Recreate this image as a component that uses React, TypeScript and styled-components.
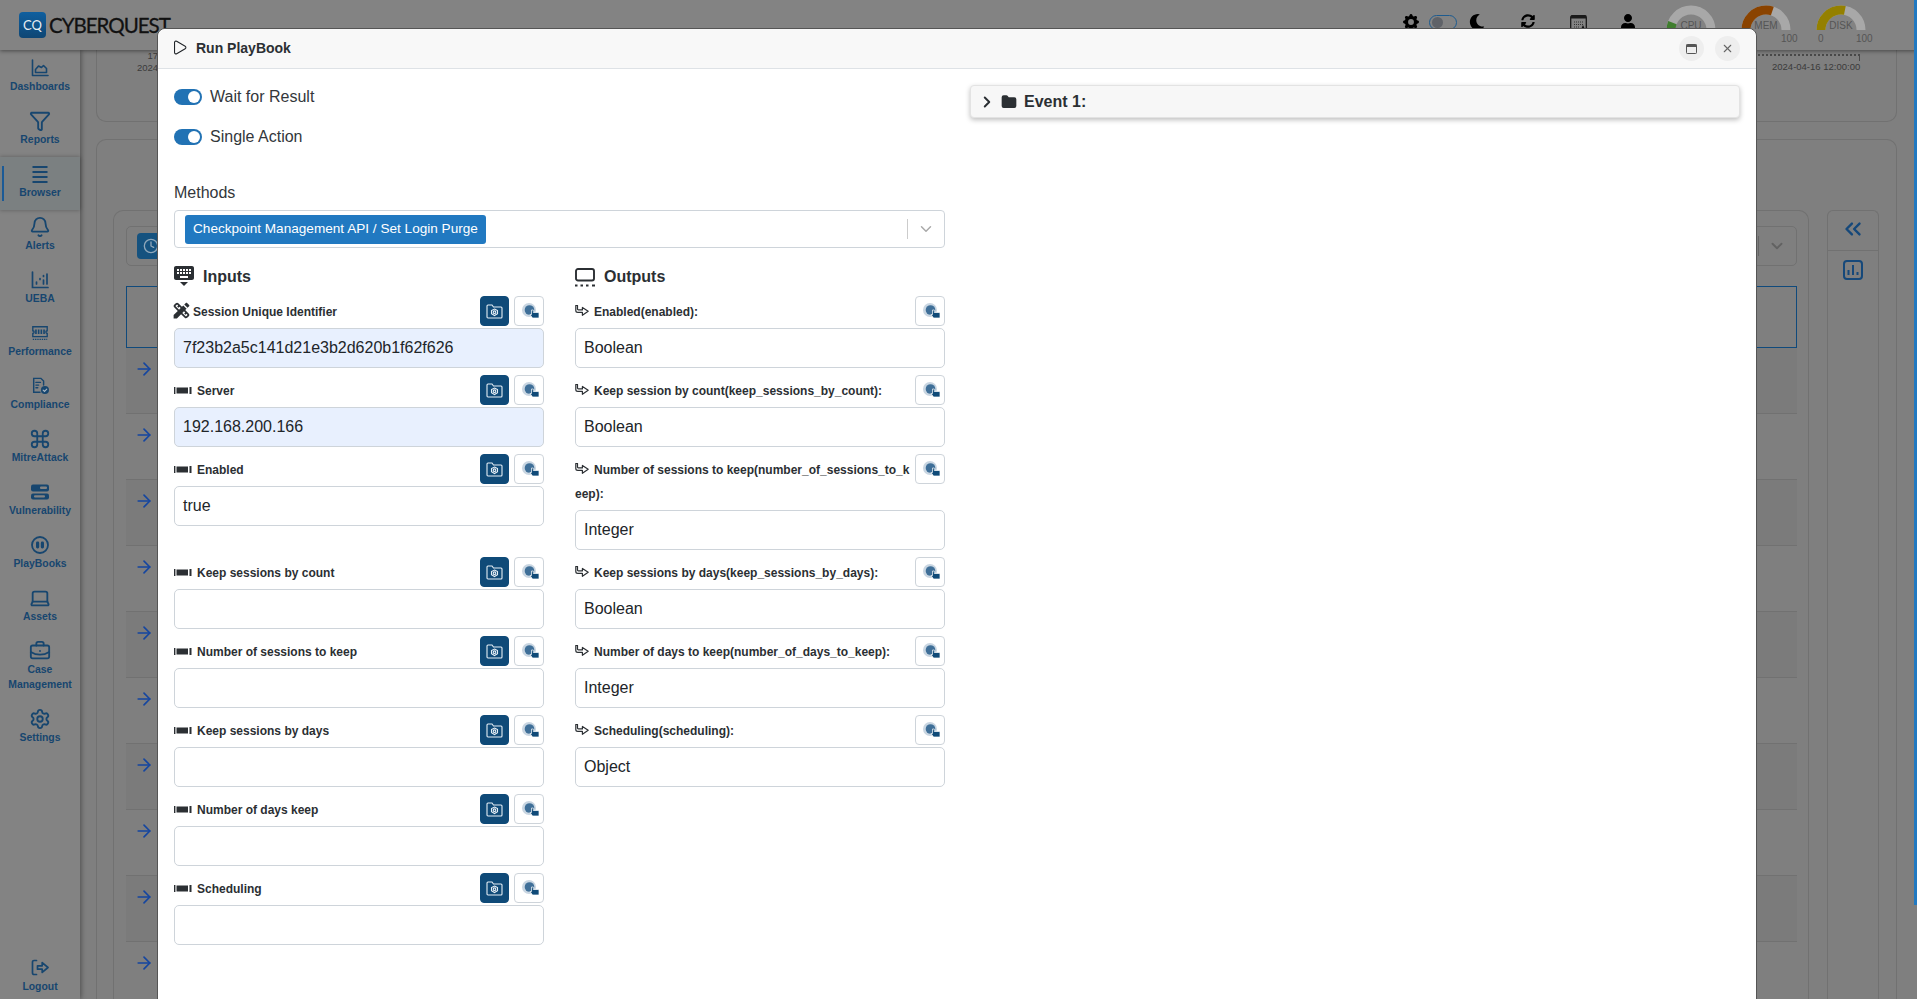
import React from 'react';
import styled, { createGlobalStyle } from 'styled-components';
import {
  ArrowRight,
  Bell,
  BriefcaseBusiness,
  ChevronDown,
  ChevronRight,
  ChevronsLeft,
  Clock,
  Command,
  Folder,
  Funnel,
  Laptop,
  Play,
  Settings,
  X,
} from 'lucide-react';
import { MdDesignServices, MdKeyboardHide } from 'react-icons/md';
import { FaMoon, FaSyncAlt, FaUser } from 'react-icons/fa';
import { BsGearFill } from 'react-icons/bs';

const GlobalStyle = createGlobalStyle`
  html, body {
    margin: 0;
    height: 100%;
    overflow: hidden;
    background: #7f7f7f;
    font-family: 'Liberation Sans', Arial, sans-serif;
  }
  * {
    box-sizing: border-box;
  }
`;

const Page = styled.div`
  position: relative;
  width: 1917px;
  height: 999px;
  overflow: hidden;
  display: flex;
  flex-direction: column;
`;

const TopBar = styled.header`
  height: 50px;
  flex: none;
  display: flex;
  align-items: flex-start;
  background: #838383;
  box-shadow: 0 1px 4px rgba(0, 0, 0, 0.45);
  position: relative;
  z-index: 2;
`;

const Logo = styled.div`
  display: flex;
  align-items: center;
  gap: 3px;
  margin: 12px 0 0 19px;
  font-family: Lato, 'Liberation Sans', sans-serif;
  font-size: 20.5px;
  letter-spacing: -1px;
  color: #111;
  -webkit-text-stroke: 0.3px #111;
`;

const LogoMark = styled.div`
  width: 27px;
  height: 26px;
  border-radius: 4px;
  background: linear-gradient(180deg, #0f5f9f, #0e4674);
  display: flex;
  align-items: center;
  justify-content: center;
  color: #e8eef3;
  font-size: 13px;
  letter-spacing: 0;
  -webkit-text-stroke: 0;
`;

const TopTools = styled.div`
  margin-left: auto;
  display: flex;
  align-items: flex-start;
  height: 50px;
  padding-right: 51px;
`;

const TopIcon = styled.div<{ $gap: number }>`
  display: flex;
  justify-content: center;
  margin: 14px 0 0 ${(props) => props.$gap}px;
  color: #000;
  font-size: 16px;
  line-height: 0;
`;

const ThemeSwitch = styled.div`
  width: 28px;
  height: 15px;
  margin: 15px 0 0 10px;
  border: 1px solid #1d5b8f;
  border-radius: 8px;
  padding: 1px 2px;
  &::before {
    content: '';
    display: block;
    width: 11px;
    height: 11px;
    border-radius: 50%;
    background: #5f6268;
  }
`;

const GaugeBox = styled.div<{ $gap: number }>`
  position: relative;
  width: 50px;
  height: 50px;
  margin: 5px 0 0 ${(props) => props.$gap}px;
`;

const GaugeLabel = styled.div`
  position: absolute;
  left: 0;
  right: 0;
  top: 15px;
  text-align: center;
  font-size: 10px;
  color: #555;
`;

const GaugeMax = styled.div`
  position: absolute;
  top: 28px;
  left: 40px;
  font-size: 10px;
  color: #555;
`;

const GaugeMin = styled.div`
  position: absolute;
  top: 28px;
  left: 2px;
  font-size: 10px;
  color: #555;
`;

const Workspace = styled.div`
  flex: 1;
  min-height: 0;
  display: flex;
`;

const SideNav = styled.nav`
  width: 80px;
  flex: none;
  display: flex;
  flex-direction: column;
  padding-top: 1px;
  background: #838383;
  box-shadow: 1px 0 5px rgba(0, 0, 0, 0.4);
  position: relative;
  z-index: 1;
`;

const NavItem = styled.div<{ $active?: boolean; $bottom?: boolean }>`
  position: relative;
  display: flex;
  flex-direction: column;
  align-items: center;
  padding: 8px 0 ${(props) => (props.$bottom ? 5 : 10)}px;
  margin-top: ${(props) => (props.$bottom ? 'auto' : 0)};
  color: #17466f;
  font-size: 10.4px;
  font-weight: 700;
  line-height: 15px;
  text-align: center;
  background: ${(props) => (props.$active ? '#7b8081' : 'transparent')};
  box-shadow: ${(props) => (props.$active ? '0 0 4px rgba(0,0,0,.3)' : 'none')};

  svg {
    display: block;
    width: 18px;
    height: 18px;
    margin-bottom: 2px;
  }

  svg.lucide {
    width: 22px;
    height: 22px;
    margin: -2px 0 0;
  }

  &::before {
    content: '';
    display: ${(props) => (props.$active ? 'block' : 'none')};
    position: absolute;
    left: 2px;
    top: 9px;
    bottom: 9px;
    width: 2px;
    background: #1b5a96;
  }
`;

const MainArea = styled.main`
  flex: 1;
  min-width: 0;
  padding: 0 20px 0 16px;
  display: flex;
  flex-direction: column;
  gap: 17px;
`;

const ChartCard = styled.section`
  height: 72px;
  flex: none;
  border: 1px solid #717171;
  border-top: none;
  border-radius: 0 0 10px 10px;
  display: flex;
  justify-content: space-between;
  padding: 0 36px 0 40px;
  font-size: 9.5px;
  color: #3b3b3b;
`;

const AxisLeft = styled.div`
  text-align: right;
  line-height: 12px;
`;

const AxisRight = styled.div`
  width: 88px;
  padding-top: 7px;
  text-align: center;
  white-space: nowrap;
  position: relative;
  margin-top: 4px;
  &::before {
    content: '';
    position: absolute;
    top: 0;
    right: 0;
    width: 200px;
    height: 5px;
    border-top: 2px dotted #4a4a4a;
    border-right: 1px solid #4a4a4a;
  }
`;

const BrowserCard = styled.section`
  flex: 1;
  min-height: 0;
  border: 1px solid #717171;
  border-bottom: none;
  border-radius: 10px 10px 0 0;
  padding: 70px 17px 0 16px;
  display: flex;
  gap: 18px;
`;

const ResultCard = styled.div`
  flex: 1;
  min-width: 0;
  border: 1px solid #717171;
  border-bottom: none;
  border-radius: 10px 10px 0 0;
  padding: 15px 11px 0 12px;
  display: flex;
  flex-direction: column;
  overflow: hidden;
`;

const FilterBar = styled.div`
  height: 40px;
  flex: none;
  border: 1px solid #717171;
  border-radius: 5px;
  display: flex;
  align-items: center;
  padding: 0 10px;
`;

const ClockButton = styled.div`
  width: 28px;
  height: 26px;
  border-radius: 4px;
  background: #15527f;
  color: #8fa7ba;
  display: flex;
  align-items: center;
  justify-content: center;
`;

const SelectEnd = styled.div`
  margin-left: auto;
  width: 28px;
  height: 20px;
  border-left: 1px solid #666;
  color: #626262;
  display: flex;
  align-items: center;
  justify-content: flex-end;
`;

const Highlight = styled.div`
  height: 62px;
  flex: none;
  margin-top: 20px;
  border: 1px solid #104a7c;
`;

const ResultRow = styled.div<{ $odd: boolean }>`
  height: 66px;
  flex: none;
  display: flex;
  align-items: flex-start;
  padding: 11px 0 0 8px;
  color: #1546a0;
  border-bottom: 1px solid #717171;
  background: ${(props) => (props.$odd ? '#7b7b7b' : 'transparent')};
`;

const ToolRail = styled.aside`
  width: 52px;
  flex: none;
  border: 1px solid #717171;
  border-bottom: none;
  border-radius: 6px 6px 0 0;
  color: #15487a;
`;

const RailCell = styled.div<{ $divider?: boolean }>`
  height: 40px;
  padding-bottom: 3px;
  display: flex;
  align-items: center;
  justify-content: center;
  border-bottom: ${(props) => (props.$divider ? '1px solid #717171' : 'none')};
`;

const ScrollThumb = styled.div`
  position: absolute;
  z-index: 3;
  top: 0;
  right: 0;
  width: 3px;
  height: 905px;
  background: #2179c1;
`;

const Modal = styled.div`
  position: absolute;
  z-index: 4;
  top: 28px;
  left: 157px;
  width: 1600px;
  height: 980px;
  border: 1px solid #555;
  border-radius: 8px 8px 0 0;
  background: #fff;
  overflow: hidden;
  color: #212529;
`;

const ModalHeader = styled.div`
  height: 40px;
  display: flex;
  align-items: center;
  padding: 0 16px;
  background: #f8f8f8;
  border-bottom: 1px solid #dee2e6;
  border-radius: 8px 8px 0 0;
`;

const PlayGlyph = styled(Play)`
  margin: 0 8.5px 2px -3.5px;
`;

const ModalTitle = styled.div`
  flex: 1;
  padding-bottom: 2px;
  font-size: 14px;
  font-weight: 700;
  color: #2b2f33;
`;

const RoundButton = styled.div`
  width: 25px;
  height: 25px;
  margin-left: 11px;
  border-radius: 50%;
  background: #eee;
  color: #666;
  display: flex;
  align-items: center;
  justify-content: center;
`;

const ModalBody = styled.div`
  display: flex;
  gap: 25px;
  padding: 16px;
`;

const LeftPane = styled.div`
  width: 771px;
  flex: none;
`;

const RightPane = styled.div`
  flex: 1;
  min-width: 0;
`;

const ToggleRow = styled.div`
  display: flex;
  align-items: center;
  gap: 8px;
  height: 24px;
  margin-bottom: 16px;
  font-size: 16px;
  color: #33373b;
`;

const Toggle = styled.div`
  width: 28px;
  height: 16px;
  border-radius: 8px;
  background: #2172b4;
  display: flex;
  align-items: center;
  justify-content: flex-end;
  padding-right: 2px;
  &::after {
    content: '';
    width: 12px;
    height: 12px;
    border-radius: 50%;
    background: #fff;
  }
`;

const MethodsLabel = styled.div`
  margin-top: 32px;
  height: 24px;
  line-height: 24px;
  font-size: 16px;
  color: #33373b;
`;

const MethodsSelect = styled.div`
  margin-top: 5px;
  height: 38px;
  border: 1px solid #ced4da;
  border-radius: 4px;
  display: flex;
  align-items: center;
  padding: 0 10px;
`;

const MethodChip = styled.div`
  height: 29px;
  padding: 0 8px;
  border-radius: 3px;
  background: #2179c1;
  color: #fff;
  font-size: 13.6px;
  line-height: 27px;
`;

const MethodsEnd = styled.div`
  margin-left: auto;
  width: 28px;
  height: 20px;
  margin-right: -1px;
  border-left: 1px solid #ccc;
  color: #aaa;
  display: flex;
  align-items: center;
  justify-content: flex-end;
`;

const FieldGrid = styled.div`
  display: grid;
  grid-template-columns: 370px 370px;
  column-gap: 31px;
  align-items: start;
`;

const SectionHead = styled.div`
  height: 48px;
  padding-top: 10px;
  display: flex;
  align-items: center;
  gap: 9px;
  font-size: 16px;
  font-weight: 700;
  color: #2b2f33;
  line-height: 0;
`;

const FieldBlock = styled.div`
  margin-bottom: 7px;
`;

const FieldLabel = styled.div`
  min-height: 32px;
  padding: 4px 0;
  font-size: 12px;
  font-weight: 700;
  line-height: 24px;
  color: #2b2f33;
  word-break: break-all;
`;

const LabelActions = styled.div`
  float: right;
  margin: -4px 0 0 2px;
  display: flex;
  gap: 5px;
`;

const SquareButton = styled.div<{ $primary?: boolean }>`
  width: ${(props) => (props.$primary ? 29 : 30)}px;
  height: 30px;
  border-radius: 4px;
  border: 1px solid ${(props) => (props.$primary ? '#0f4a78' : '#ced4da')};
  background: ${(props) => (props.$primary ? '#0f4a78' : '#fff')};
  display: flex;
  align-items: center;
  justify-content: center;
`;

const FieldValue = styled.div<{ $filled?: boolean }>`
  height: 40px;
  border: 1px solid #ced4da;
  border-radius: 5px;
  padding: 0 8px;
  font-size: 16px;
  line-height: 38px;
  color: #212529;
  background: ${(props) => (props.$filled ? '#e8f0fe' : '#fff')};
`;

const EventBar = styled.div`
  height: 33px;
  display: flex;
  align-items: center;
  padding-left: 7px;
  gap: 5px;
  border: 1px solid #e3e3e3;
  border-radius: 4px;
  background: #f7f7f7;
  box-shadow: 0 2px 5px rgba(0, 0, 0, 0.25);
  font-size: 16px;
  font-weight: 700;
  color: #2b2f33;
`;

const EventFolder = styled(Folder)`
  margin-right: 2px;
`;

const ToolGlyph = styled(MdDesignServices)`
  vertical-align: -5px;
  margin: 0 1px 0 -3px;
`;

const PortGlyph = styled.svg`
  vertical-align: 1px;
  margin-right: 5px;
`;

const ArrowGlyph = styled.svg`
  vertical-align: -1px;
  margin-right: 5px;
`;

const PointerGlyph = styled.svg`
  margin-left: 3px;
`;

const KeyboardGlyph = styled(MdKeyboardHide)`
  margin: 0 -2px 4px;
`;

const Gauge: React.FC<{ label: string; color: string; end: number; gap: number; showMin?: boolean }> = ({
  label,
  color,
  end,
  gap,
  showMin,
}) => {
  const length = Math.PI * 20;
  return (
    <GaugeBox $gap={gap}>
      <svg width="50" height="26" viewBox="0 0 50 26">
        <path d="M5 25 A20 20 0 0 1 45 25" fill="none" stroke="#a8a8a8" strokeWidth="9" />
        <path
          d="M5 25 A20 20 0 0 1 45 25"
          fill="none"
          stroke={color}
          strokeWidth="9"
          strokeDasharray={`${length * end} ${length}`}
        />
      </svg>
      <GaugeLabel>{label}</GaugeLabel>
      {showMin && <GaugeMin>0</GaugeMin>}
      <GaugeMax>100</GaugeMax>
    </GaugeBox>
  );
};

const AreaIcon = () => (
  <svg viewBox="0 0 18 18" fill="none" stroke="currentColor" strokeWidth="1.6" strokeLinecap="round" strokeLinejoin="round">
    <path d="M1.5 1v15.5h15.5" />
    <path d="M4.5 13.5v-3l3-3.5 3 1.5 2-2 3 3v4z" />
  </svg>
);

const BrowserIcon = () => (
  <svg viewBox="0 0 18 18" fill="none" stroke="currentColor" strokeWidth="2">
    <path d="M1.500 2h15M1.500 7h15M1.500 12h15M1.500 17h15" />
  </svg>
);

const UebaIcon = () => (
  <svg viewBox="0 0 18 18" fill="none" stroke="currentColor" strokeWidth="1.7" strokeLinecap="round">
    <path d="M1.5 1v15.5h15.5" />
    <path d="M5.500 11v2M9 7.500v1M12.500 4.500v1M12.500 9v4M16 3v10" />
  </svg>
);

const MemoryIcon = () => (
  <svg viewBox="0 0 20 18" fill="none" stroke="currentColor" strokeWidth="1.5">
    <path d="M2 2h16v4.500a1.500 1.500 0 0 0 0 3V13H2V9.500a1.500 1.500 0 0 0 0-3z" />
    <path d="M5.500 5v5M8.500 5v5M11.500 5v5M14.500 5v5" strokeWidth="1.800" />
    <path d="M2 16h16" strokeDasharray="1.500 1" />
  </svg>
);

const ComplianceIcon = () => (
  <svg viewBox="0 0 20 20" fill="none" stroke="currentColor" strokeWidth="1.6" strokeLinecap="round">
    <path d="M10 17H3V1.500h8l3 3V9" />
    <path d="M5.500 6h5M5.500 9h3M5.500 12h2" />
    <circle cx="15.500" cy="14.500" r="4.500" fill="currentColor" stroke="none" />
    <path d="M13.500 14.500l1.500 1.500 2.500-2.500" stroke="#a9b7c4" strokeWidth="1.200" />
  </svg>
);

const VulnerabilityIcon = () => (
  <svg viewBox="0 0 18 18" fill="currentColor">
    <rect x="0" y="1.500" width="18" height="7" rx="2" />
    <rect x="0" y="10.500" width="18" height="6" rx="2" />
    <rect x="9" y="3.500" width="7" height="2.400" rx="1" fill="#838383" />
    <rect x="3" y="12.300" width="11" height="2.200" rx="1" fill="#838383" />
  </svg>
);

const PlayBooksIcon = () => (
  <svg viewBox="0 0 18 18" fill="none">
    <circle cx="9" cy="9" r="8" stroke="currentColor" strokeWidth="1.800" />
    <rect x="5" y="5.500" width="3.200" height="7" rx="1.400" fill="currentColor" />
    <rect x="9.800" y="5.500" width="3.200" height="7" rx="1.400" fill="currentColor" />
  </svg>
);

const LogoutIcon = () => (
  <svg viewBox="0 0 18 18" fill="none" stroke="currentColor" strokeWidth="1.700" strokeLinecap="round" strokeLinejoin="round">
    <path d="M5.500 1.500H3a1.500 1.500 0 0 0-1.500 1.500v11A1.500 1.500 0 0 0 3 15.500h2.500" />
    <path d="M6.500 6.800h4.700V3.600L17 8.500l-5.800 4.900v-3.200H6.500z" />
  </svg>
);

const CalendarIcon = () => (
  <svg width="17" height="18" viewBox="0 0 17 18" fill="none">
    <rect x="0.700" y="1.700" width="15.600" height="15" rx="1.500" stroke="#1a1a1a" strokeWidth="1.300" />
    <rect x="1" y="1.500" width="15" height="3" fill="#1a1a1a" />
    <path d="M4 8h9M4 10.500h9M4 13h6" stroke="#333" strokeWidth="1.200" strokeDasharray="1 1" />
    <path d="M13 11l2.500 5.500h-5z" fill="#111" />
  </svg>
);

const ChartSquareIcon = () => (
  <svg width="20" height="20" viewBox="0 0 20 20" fill="none" stroke="currentColor">
    <rect x="1" y="1" width="18" height="18" rx="3" strokeWidth="2" />
    <path d="M5.500 10v5M10 5v10M14.500 12v3" strokeWidth="2" />
  </svg>
);

const ScreenIcon = () => (
  <svg width="20" height="19" viewBox="0 0 20 19" fill="none">
    <rect x="1" y="1" width="18" height="11.500" rx="2" stroke="#2b2f33" strokeWidth="1.900" />
    <path d="M0 17.500h2.500M5.500 17.500h2.500M11 17.500h2.500M17 17.500h3" stroke="#2b2f33" strokeWidth="2.200" />
  </svg>
);

const PortIcon = () => (
  <PortGlyph width="18" height="7" viewBox="0 0 18 7" fill="#2b2f33">
    <rect x="0" y="0" width="1.400" height="7" />
    <rect x="2.500" y="0.500" width="11.500" height="6" />
    <rect x="15.500" y="0" width="2" height="7" />
  </PortGlyph>
);

const OutArrowIcon = () => (
  <ArrowGlyph width="14" height="12" viewBox="0 0 14 12" fill="none" stroke="#2b2f33" strokeWidth="1.200" strokeLinejoin="round">
    <path d="M0.800 0.500v5c0 1.200.8 1.900 2 1.900h4.600v2.900l5.800-4-5.800-3.800v2.400H3.300c-.5 0-.8-.3-.8-.8V.5z" />
  </ArrowGlyph>
);

const FolderLensIcon = () => (
  <svg width="17" height="15" viewBox="0 0 17 15" fill="none" stroke="#e6eef5" strokeWidth="1.100">
    <path d="M1 3V2a1 1 0 0 1 1-1h4l1.500 2H15a1 1 0 0 1 1 1v9a1 1 0 0 1-1 1H2a1 1 0 0 1-1-1z" />
    <path d="M8.500 5l3 1.600v3.200l-3 1.700-3-1.700V6.600z" />
    <circle cx="8.500" cy="8.200" r="1.300" />
  </svg>
);

const PointerIcon = () => (
  <PointerGlyph width="18" height="16" viewBox="0 0 18 16">
    <circle cx="7" cy="7" r="7" fill="#c9d6e2" />
    <circle cx="7.500" cy="7" r="4.800" fill="#3f6f98" />
    <path d="M9.500 7h1.800v2.500h4.700a1 1 0 0 1 1 1V15H10.500L8 11.500h1.500z" fill="#0f4a78" stroke="#fff" strokeWidth="0.700" />
  </PointerGlyph>
);

const WindowIcon = () => (
  <svg width="11" height="10" viewBox="0 0 11 10" fill="none">
    <rect x="0.500" y="0.500" width="10" height="9" rx="0.800" stroke="#555" />
    <rect x="0.500" y="0.500" width="10" height="2.500" fill="#555" />
  </svg>
);

const navItems: { label: React.ReactNode; icon: React.ReactNode; active?: boolean }[] = [
  { label: 'Dashboards', icon: <AreaIcon /> },
  { label: 'Reports', icon: <Funnel /> },
  { label: 'Browser', icon: <BrowserIcon />, active: true },
  { label: 'Alerts', icon: <Bell /> },
  { label: 'UEBA', icon: <UebaIcon /> },
  { label: 'Performance', icon: <MemoryIcon /> },
  { label: 'Compliance', icon: <ComplianceIcon /> },
  { label: 'MitreAttack', icon: <Command /> },
  { label: 'Vulnerability', icon: <VulnerabilityIcon /> },
  { label: 'PlayBooks', icon: <PlayBooksIcon /> },
  { label: 'Assets', icon: <Laptop /> },
  { label: <>Case<br />Management</>, icon: <BriefcaseBusiness /> },
  { label: 'Settings', icon: <Settings /> },
];

const inputs: { label: string; value?: string; filled?: boolean; tool?: boolean }[] = [
  { label: 'Session Unique Identifier', value: '7f23b2a5c141d21e3b2d620b1f62f626', filled: true, tool: true },
  { label: 'Server', value: '192.168.200.166', filled: true },
  { label: 'Enabled', value: 'true' },
  { label: 'Keep sessions by count' },
  { label: 'Number of sessions to keep' },
  { label: 'Keep sessions by days' },
  { label: 'Number of days keep' },
  { label: 'Scheduling' },
];

const outputs: { label: string; value: string }[] = [
  { label: 'Enabled(enabled):', value: 'Boolean' },
  { label: 'Keep session by count(keep_sessions_by_count):', value: 'Boolean' },
  { label: 'Number of sessions to keep(number_of_sessions_to_keep):', value: 'Integer' },
  { label: 'Keep sessions by days(keep_sessions_by_days):', value: 'Boolean' },
  { label: 'Number of days to keep(number_of_days_to_keep):', value: 'Integer' },
  { label: 'Scheduling(scheduling):', value: 'Object' },
];

const resultRows = [0, 1, 2, 3, 4, 5, 6, 7, 8, 9];

const App: React.FC = () => {
  return (
    <Page>
      <GlobalStyle />
      <TopBar>
        <Logo>
          <LogoMark>CQ</LogoMark>
          CYBERQUEST
        </Logo>
        <TopTools>
          <TopIcon $gap={0}>
            <BsGearFill />
          </TopIcon>
          <ThemeSwitch />
          <TopIcon $gap={12}>
            <FaMoon />
          </TopIcon>
          <TopIcon $gap={36}>
            <FaSyncAlt size={14} />
          </TopIcon>
          <TopIcon $gap={35}>
            <CalendarIcon />
          </TopIcon>
          <TopIcon $gap={33}>
            <FaUser />
          </TopIcon>
          <Gauge label="CPU" color="#3f7d2e" end={0.12} gap={30} />
          <Gauge label="MEM" color="#8a4300" end={0.6} gap={25} />
          <Gauge label="DISK" color="#948000" end={0.56} gap={25} showMin />
        </TopTools>
      </TopBar>
      <Workspace>
        <SideNav>
          {navItems.map((item, index) => (
            <NavItem key={index} $active={item.active}>
              {item.icon}
              <span>{item.label}</span>
            </NavItem>
          ))}
          <NavItem $bottom>
            <LogoutIcon />
            <span>Logout</span>
          </NavItem>
        </SideNav>
        <MainArea>
          <ChartCard>
            <AxisLeft>
              17
              <br />
              2024
            </AxisLeft>
            <AxisRight>2024-04-16 12:00:00</AxisRight>
          </ChartCard>
          <BrowserCard>
            <ResultCard>
              <FilterBar>
                <ClockButton>
                  <Clock size={16} />
                </ClockButton>
                <SelectEnd>
                  <ChevronDown size={18} strokeWidth={2.5} />
                </SelectEnd>
              </FilterBar>
              <Highlight />
              {resultRows.map((row) => (
                <ResultRow key={row} $odd={row % 2 === 0}>
                  <ArrowRight size={20} strokeWidth={2} />
                </ResultRow>
              ))}
            </ResultCard>
            <ToolRail>
              <RailCell $divider>
                <ChevronsLeft size={26} strokeWidth={2.2} />
              </RailCell>
              <RailCell>
                <ChartSquareIcon />
              </RailCell>
            </ToolRail>
          </BrowserCard>
        </MainArea>
      </Workspace>
      <ScrollThumb />
      <Modal>
        <ModalHeader>
          <PlayGlyph size={17} strokeWidth={1.5} />
          <ModalTitle>Run PlayBook</ModalTitle>
          <RoundButton>
            <WindowIcon />
          </RoundButton>
          <RoundButton>
            <X size={13} />
          </RoundButton>
        </ModalHeader>
        <ModalBody>
          <LeftPane>
            <ToggleRow>
              <Toggle />
              Wait for Result
            </ToggleRow>
            <ToggleRow>
              <Toggle />
              Single Action
            </ToggleRow>
            <MethodsLabel>Methods</MethodsLabel>
            <MethodsSelect>
              <MethodChip>Checkpoint Management API / Set Login Purge</MethodChip>
              <MethodsEnd>
                <ChevronDown size={18} />
              </MethodsEnd>
            </MethodsSelect>
            <FieldGrid>
              <SectionHead>
                <KeyboardGlyph size={24} />
                Inputs
              </SectionHead>
              <SectionHead>
                <ScreenIcon />
                Outputs
              </SectionHead>
              {inputs.map((input, index) => (
                <React.Fragment key={input.label}>
                  <FieldBlock>
                    <FieldLabel>
                      <LabelActions>
                        <SquareButton $primary>
                          <FolderLensIcon />
                        </SquareButton>
                        <SquareButton>
                          <PointerIcon />
                        </SquareButton>
                      </LabelActions>
                      {input.tool ? <ToolGlyph size={21} /> : <PortIcon />}
                      {input.label}
                    </FieldLabel>
                    <FieldValue $filled={input.filled}>{input.value}</FieldValue>
                  </FieldBlock>
                  {outputs[index] ? (
                    <FieldBlock>
                      <FieldLabel>
                        <LabelActions>
                          <SquareButton>
                            <PointerIcon />
                          </SquareButton>
                        </LabelActions>
                        <OutArrowIcon />
                        {outputs[index].label}
                      </FieldLabel>
                      <FieldValue>{outputs[index].value}</FieldValue>
                    </FieldBlock>
                  ) : (
                    <div />
                  )}
                </React.Fragment>
              ))}
            </FieldGrid>
          </LeftPane>
          <RightPane>
            <EventBar>
              <ChevronRight size={18} strokeWidth={2.6} />
              <EventFolder size={16} fill="currentColor" />
              Event 1:
            </EventBar>
          </RightPane>
        </ModalBody>
      </Modal>
    </Page>
  );
};

export default App;
